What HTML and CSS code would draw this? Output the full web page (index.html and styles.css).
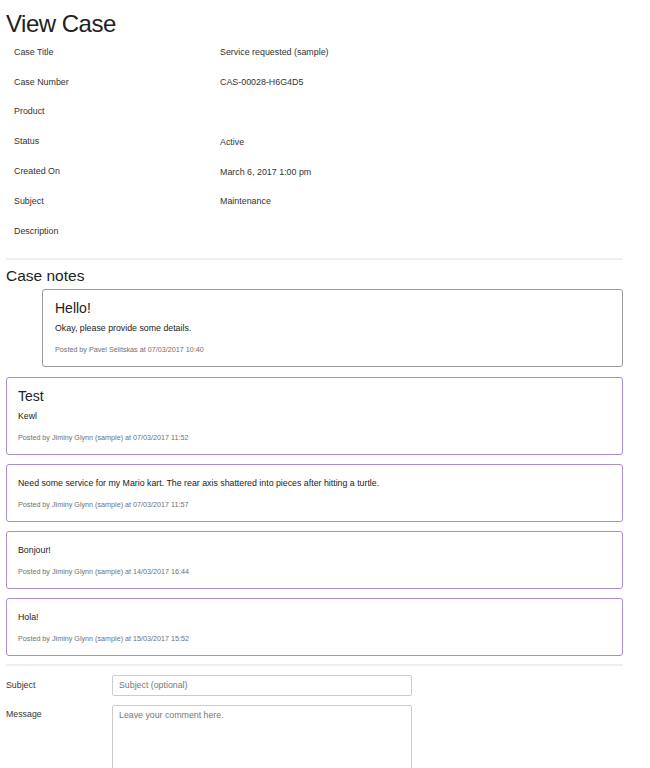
FILE: index.html
```html
<!DOCTYPE html>
<html lang="en">
<head>
<meta charset="utf-8">
<title>View Case</title>
<link rel="stylesheet" href="styles.css">
</head>
<body>
<div class="page">
  <h1 class="page-title">View Case</h1>
  <div class="details">
    <div class="label">Case Title</div><div class="value">Service requested (sample)</div>
    <div class="label">Case Number</div><div class="value">CAS-00028-H6G4D5</div>
    <div class="label">Product</div><div class="value"></div>
    <div class="label">Status</div><div class="value">Active</div>
    <div class="label">Created On</div><div class="value">March 6, 2017 1:00 pm</div>
    <div class="label">Subject</div><div class="value">Maintenance</div>
    <div class="label">Description</div><div class="value"></div>
  </div>
  <hr class="rule">
  <h2 class="section-title">Case notes</h2>
  <div class="notes">
    <div class="note note--staff">
      <h3 class="note-title">Hello!</h3>
      <p class="note-body">Okay, please provide some details.</p>
      <div class="note-meta">Posted by Pavel Selitskas at 07/03/2017 10:40</div>
    </div>
    <div class="note">
      <h3 class="note-title">Test</h3>
      <p class="note-body">Kewl</p>
      <div class="note-meta">Posted by Jiminy Glynn (sample) at 07/03/2017 11:52</div>
    </div>
    <div class="note note--plain">
      <p class="note-body">Need some service for my Mario kart. The rear axis shattered into pieces after hitting a turtle.</p>
      <div class="note-meta">Posted by Jiminy Glynn (sample) at 07/03/2017 11:57</div>
    </div>
    <div class="note note--plain">
      <p class="note-body">Bonjour!</p>
      <div class="note-meta">Posted by Jiminy Glynn (sample) at 14/03/2017 16:44</div>
    </div>
    <div class="note note--plain">
      <p class="note-body">Hola!</p>
      <div class="note-meta">Posted by Jiminy Glynn (sample) at 15/03/2017 15:52</div>
    </div>
  </div>
  <hr class="rule rule--form">
  <form class="comment-form">
    <label class="form-label" for="subj">Subject</label>
    <input class="form-input" id="subj" type="text" placeholder="Subject (optional)">
    <label class="form-label form-label--top" for="msg">Message</label>
    <textarea class="form-input form-textarea" id="msg" placeholder="Leave your comment here."></textarea>
  </form>
</div>
</body>
</html>
```

FILE: styles.css
```css
html, body {
  margin: 0;
  padding: 0;
  background: #ffffff;
}

body {
  font-family: "Liberation Sans", Arial, sans-serif;
  color: #333333;
}

.page {
  width: 617px;
  padding-left: 6px;
}

.page-title {
  margin: 10px 0 0;
  font-size: 24px;
  line-height: 27px;
  font-weight: normal;
  letter-spacing: -0.5px;
  color: #222222;
}

.details {
  display: grid;
  grid-template-columns: 206px 1fr;
  grid-auto-rows: 29.8px;
  padding-left: 8px;
  font-size: 8.9px;
  color: #333333;
}

.label,
.value {
  display: flex;
  align-items: center;
}

.value {
  padding-top: 1px;
}

.rule {
  margin: 12px 0 0;
  border: 0;
  border-top: 2px solid #eeeeee;
  height: 0;
}

.section-title {
  margin: 7px 0 4px;
  font-size: 15.5px;
  line-height: 18px;
  font-weight: normal;
  color: #222222;
}

.notes {
  display: flex;
  flex-direction: column;
  gap: 9px;
}

.note {
  border: 1px solid #a98cdb;
  border-radius: 3px;
  padding: 9px 12px 11px 11px;
}

.note--staff {
  margin-left: 36px;
  margin-bottom: 1px;
  padding-left: 12px;
  border-color: #9a9a9a;
}

.note--plain {
  padding-top: 12px;
}

.note-title {
  margin: 0 0 5px;
  font-size: 14px;
  line-height: 18px;
  font-weight: normal;
  color: #222222;
}

.note-body {
  margin: 0 0 11px;
  font-size: 8.8px;
  line-height: 12px;
  color: #222222;
}

.note-meta {
  font-size: 7.2px;
  line-height: 10px;
  color: #707070;
}

.rule--form {
  margin-top: 8px;
}

.comment-form {
  display: grid;
  grid-template-columns: 106px 300px;
  row-gap: 9px;
  margin-top: 9px;
  align-items: center;
}

.form-label {
  font-size: 8.8px;
  color: #333333;
}

.form-label--top {
  align-self: start;
  padding-top: 4px;
}

.form-input {
  box-sizing: border-box;
  width: 300px;
  height: 21px;
  margin: 0;
  border: 1px solid #cccccc;
  border-radius: 2px;
  padding: 0 6px;
  font-family: "Liberation Sans", Arial, sans-serif;
  font-size: 8.8px;
  color: #333333;
  background: #ffffff;
}

.form-input::placeholder {
  color: #777777;
}

.form-textarea {
  height: 90px;
  padding: 4px 6px;
  resize: none;
}
```
